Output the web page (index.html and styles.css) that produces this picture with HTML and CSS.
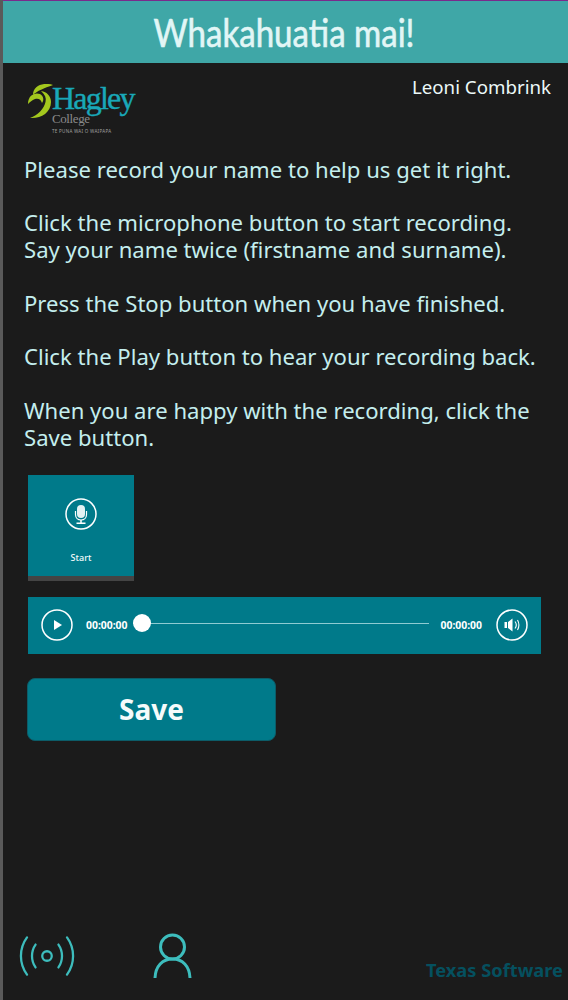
FILE: index.html
```html
<!DOCTYPE html>
<html lang="en">

<head>
    <meta charset="UTF-8">
    <meta name="viewport" content="width=device-width, initial-scale=1.0">
    <title>Whakahuatia mai!</title>
    <link rel="stylesheet" href="styles.css">
</head>

<body>
    <div id="page">
        <header class="title-bar">
            <h1>Whakahuatia mai!</h1>
        </header>

        <main class="content">
            <div class="top-row">
                <div class="logo">
                    <svg class="logo-swirl" width="26" height="36" viewBox="0 0 26 36" fill="#a4c81e">
                        <path d="M25 1 C16 -2 5 1 5 11 C9 7 16 4 25 1 Z"/>
                        <path d="M0 20 C0 11 7 8 12 10 C16 12 16 17 14 19 C13 15 10 14 7 15 C4 16 2 18 0 20 Z"/>
                        <path d="M2 34 C12 35 23 29 23 18 C23 12 19 8 13 7 C17 10.500 18.500 14 17.500 18 C16 25 10 31 2 34 Z"/>
                    </svg>
                    <div class="logo-text">
                        <span class="logo-hagley">Hagley</span>
                        <span class="logo-college">College</span>
                        <span class="logo-motto">TE PUNA WAI O WAIPAPA</span>
                    </div>
                </div>
                <div class="user-name">Leoni Combrink</div>
            </div>

            <div class="instructions">
                <p>Please record your name to help us get it right.</p>
                <p>Click the microphone button to start recording.<br>Say your name twice (firstname and surname).</p>
                <p>Press the Stop button when you have finished.</p>
                <p>Click the Play button to hear your recording back.</p>
                <p>When you are happy with the recording, click the Save button.</p>
            </div>

            <button class="record-button">
                <svg width="32" height="32" viewBox="0 0 32 32" fill="none" stroke="#fff">
                    <circle cx="16" cy="16" r="15" stroke-width="1.5"/>
                    <rect x="12" y="7" width="8" height="13" rx="4" fill="#e4f2f3" stroke="none"/>
                    <path d="M10.500 13 V16.500 C10.500 20 13 22 16 22 C19 22 21.500 20 21.500 16.500 V13" stroke-width="1.200"/>
                    <path d="M16 22 V25 M11.500 25.200 H20.500" stroke-width="1.500"/>
                </svg>
                <span>Start</span>
            </button>

            <div class="player">
                <svg class="player-icon" width="32" height="32" viewBox="0 0 32 32">
                    <circle cx="16" cy="16" r="15" fill="none" stroke="#fff" stroke-width="1.5"/>
                    <path d="M13 11 L21 16 L13 21 Z" fill="#fff"/>
                </svg>
                <span class="time time-left">00:00:00</span>
                <div class="track"><div class="thumb"></div></div>
                <span class="time time-right">00:00:00</span>
                <svg class="player-icon volume" width="32" height="32" viewBox="0 0 32 32">
                    <circle cx="16" cy="16" r="15" fill="none" stroke="#fff" stroke-width="1.5"/>
                    <path d="M8.500 13 H11 V19 H8.500 Z M12 13 L16.500 9.500 V22.500 L12 19 Z" fill="#fff"/>
                    <path d="M19 12.500 C20.500 14.500 20.500 17.500 19 19.500 M21.500 11 C23.200 14 23.200 18 21.500 21" fill="none" stroke="#fff" stroke-width="1.100"/>
                </svg>
            </div>

            <button class="save-button">Save</button>
        </main>

        <footer class="bottom-bar">
            <svg class="nav-broadcast" width="56" height="40" viewBox="0 0 58 42" fill="none" stroke="#3dbdbd" stroke-width="2.4" stroke-linecap="round">
                <circle cx="29" cy="21" r="5"/>
                <path d="M17 9 C12 16 12 26 17 33"/>
                <path d="M41 9 C46 16 46 26 41 33"/>
                <path d="M8 1.500 C-0.500 13 -0.500 29 8 40.500"/>
                <path d="M50 1.500 C58.500 13 58.500 29 50 40.500"/>
            </svg>
            <svg class="nav-user" width="39" height="46" viewBox="0 0 38 46" fill="none" stroke="#3dbdbd" stroke-width="3">
                <circle cx="19" cy="14" r="12"/>
                <path d="M1.500 45 C2 33 9 26 19 26 C29 26 36 33 36.500 45"/>
            </svg>
            <span class="credit">Texas Software</span>
        </footer>
    </div>
</body>

</html>
```

FILE: styles.css
```css
* {
    box-sizing: border-box;
}

body {
    margin: 0;
    background-color: #1b1b1b;
    font-family: "Noto Sans", "Open Sans", sans-serif;
}

#page {
    display: flex;
    flex-direction: column;
    height: 1000px;
    border-left: 3px solid #5a5a5a;
    overflow: hidden;
}

.title-bar {
    height: 63px;
    border-top: 1px solid #7a2a8c;
    background-color: #3fa7a7;
    display: flex;
    align-items: center;
    justify-content: center;
}

.title-bar h1 {
    margin: 0 0 0 -3px;
    color: #e2f6f6;
    font-family: "Lato", sans-serif;
    font-size: 38px;
    font-weight: 400;
    -webkit-text-stroke: 0.6px #e2f6f6;
    transform: scaleX(0.87);
    white-space: nowrap;
}

.content {
    flex: 1;
    padding: 0 0 0 21px;
}

.top-row {
    display: flex;
    justify-content: space-between;
    align-items: flex-start;
    padding: 12px 17px 0 4px;
    height: 93px;
}

.logo {
    display: flex;
    align-items: flex-start;
    margin-top: 9px;
}

.logo-text {
    display: flex;
    flex-direction: column;
    width: 84px;
    margin-left: -2px;
}

.logo-hagley {
    color: #19a8b8;
    font-family: "Liberation Serif", serif;
    font-size: 32px;
    line-height: 29px;
    letter-spacing: -1.8px;
    -webkit-text-stroke: 0.4px #19a8b8;
}

.logo-college {
    color: #8a8a8a;
    font-family: "Liberation Serif", serif;
    font-size: 13px;
    line-height: 12px;
    letter-spacing: -0.4px;
}

.logo-motto {
    color: #a0a0a0;
    font-size: 4.5px;
    line-height: 6px;
    margin-top: 3px;
    letter-spacing: 0.3px;
    white-space: nowrap;
}

.user-name {
    color: #ecf9f9;
    font-size: 18.7px;
    line-height: 24px;
}

.instructions {
    width: 525px;
    color: #c4eeee;
    font-size: 22.1px;
    line-height: 27px;
}

.instructions p {
    margin: 0 0 26.4px;
}

.record-button {
    display: flex;
    flex-direction: column;
    align-items: center;
    width: 106px;
    height: 106px;
    margin: -2px 0 0 4px;
    padding: 23px 0 0;
    border: none;
    border-bottom: 5px solid #444;
    background-color: #007a8a;
    color: #f2fbfb;
    font-family: inherit;
    font-size: 9px;
    font-weight: 500;
}

.record-button span {
    margin-top: 21px;
}

.player {
    display: flex;
    align-items: center;
    width: 513px;
    height: 57px;
    margin: 16px 0 0 4px;
    padding: 0 13px;
    background-color: #007a8a;
}

.time {
    color: #fff;
    font-size: 10.4px;
    font-weight: 700;
}

.time-left {
    margin-left: 13px;
}

.time-right {
    margin: 0 14px 0 12px;
}

.player-icon {
    flex-shrink: 0;
}

.track {
    position: relative;
    flex: 1;
    height: 1px;
    margin-left: 5px;
    background-color: #8fcbd2;
    top: -2px;
}

.thumb {
    position: absolute;
    left: 0;
    top: -9px;
    width: 18px;
    height: 18px;
    border-radius: 50%;
    background-color: #fff;
}

.save-button {
    display: block;
    width: 249px;
    height: 63px;
    margin: 24px 0 0 3px;
    border: 1px solid #0c5c68;
    border-radius: 8px;
    background-color: #007a8a;
    color: #f5fbfb;
    font-family: inherit;
    font-size: 28px;
    font-weight: 700;
}

.bottom-bar {
    display: flex;
    align-items: flex-end;
    height: 72px;
    padding: 0 5px 21px 16px;
}

.nav-user {
    margin-left: 78px;
}

.nav-broadcast {
    margin-bottom: 3px;
}

.credit {
    margin: 0 0 -1px auto;
    color: #05505f;
    font-size: 18.3px;
    font-weight: 700;
    line-height: 20px;
}
```
